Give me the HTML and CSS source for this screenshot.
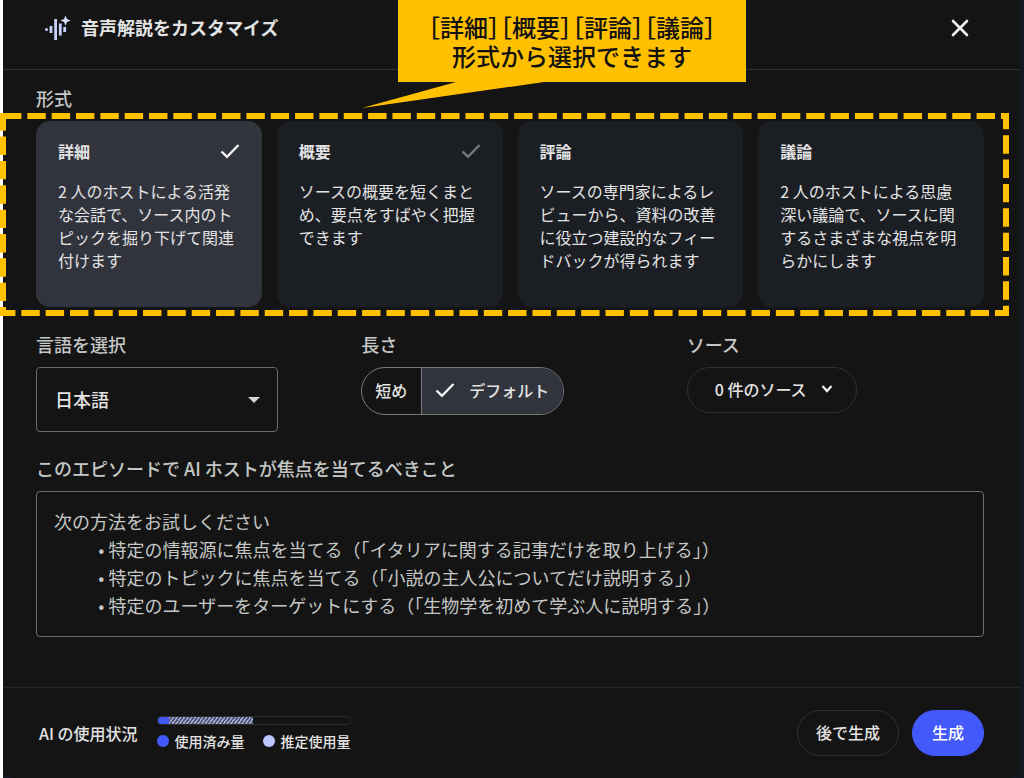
FILE: index.html
```html
<!DOCTYPE html>
<html lang="ja">
<head>
    <meta charset="UTF-8">
    <title>音声解説をカスタマイズ</title>
    <link rel="stylesheet" href="styles.css">
</head>
<body>
<div class="backdrop">
    <form class="dialog">
        <div class="header">
            <svg class="logo" width="28" height="28" viewBox="0 0 28 28" fill="none" stroke="#c5cffa" stroke-width="2.8">
                <path d="M8 12v7M12.600 5v21M17.300 9.500v12M21.700 13v5" />
                <circle cx="3.500" cy="15.500" r="1.500" fill="#c5cffa" stroke="none" />
                <path d="M22.500 1.500l1.400 3.600 3.800 1.400-3.800 1.400-1.400 3.800-1.400-3.800-3.800-1.400 3.800-1.400z" fill="#dbe1ff" stroke="none" />
            </svg>
            <h1>音声解説をカスタマイズ</h1>
            <button type="button" class="close" aria-label="閉じる">
                <svg width="20" height="20" viewBox="0 0 20 20" stroke="#f2f2f2" stroke-width="2.6" stroke-linecap="round"><path d="M3 3l14 14M17 3L3 17" /></svg>
            </button>
        </div>

        <div class="content">
            <fieldset class="formats">
                <legend class="label">形式</legend>
                <div class="cards">
                    <label class="card">
                        <input type="radio" name="format" class="hidden" checked>
                        <span class="card-title">詳細 <svg class="check" viewBox="0 0 20 16"><path d="M1.500 8.500l5.500 5.300L18.500 2" /></svg></span>
                        <span class="card-text">2 人のホストによる活発な会話で、ソース内のトピックを掘り下げて関連付けます</span>
                    </label>
                    <label class="card">
                        <input type="radio" name="format" class="hidden">
                        <span class="card-title">概要 <svg class="check faint" viewBox="0 0 20 16"><path d="M1.500 8.500l5.500 5.300L18.500 2" /></svg></span>
                        <span class="card-text">ソースの概要を短くまとめ、要点をすばやく把握できます</span>
                    </label>
                    <label class="card">
                        <input type="radio" name="format" class="hidden">
                        <span class="card-title">評論</span>
                        <span class="card-text">ソースの専門家によるレビューから、資料の改善に役立つ建設的なフィードバックが得られます</span>
                    </label>
                    <label class="card">
                        <input type="radio" name="format" class="hidden">
                        <span class="card-title">議論</span>
                        <span class="card-text">2 人のホストによる思慮深い議論で、ソースに関するさまざまな視点を明らかにします</span>
                    </label>
                    <div class="marker">
                        <svg width="100%" height="100%"><rect width="100%" height="100%" /></svg>
                    </div>
                </div>
            </fieldset>

            <div class="options">
                <div>
                    <label class="label" for="lang">言語を選択</label>
                    <div class="select">
                        <select id="lang"><option>日本語</option></select>
                        <svg width="12" height="6" viewBox="0 0 12 6"><path d="M0 0h12L6 6z" fill="#d6d6d6" /></svg>
                    </div>
                </div>
                <fieldset>
                    <legend class="label">長さ</legend>
                    <div class="segment">
                        <label><input type="radio" name="length" class="hidden">短め</label>
                        <label class="selected"><input type="radio" name="length" class="hidden" checked><svg class="check" viewBox="0 0 20 16"><path d="M1.500 8.500l5.500 5.300L18.500 2" /></svg>デフォルト</label>
                    </div>
                </fieldset>
                <div>
                    <div class="label">ソース</div>
                    <button type="button" class="pill sources">0 件のソース
                        <svg width="12" height="10" viewBox="0 0 12 10" fill="none" stroke="#f2f2f2" stroke-width="2.200"><path d="M1.500 2L6 7l4.500-5" /></svg>
                    </button>
                </div>
            </div>

            <label class="label" for="focus">このエピソードで AI ホストが焦点を当てるべきこと</label>
            <textarea id="focus" placeholder="次の方法をお試しください
           • 特定の情報源に焦点を当てる（「イタリアに関する記事だけを取り上げる」）
           • 特定のトピックに焦点を当てる（「小説の主人公についてだけ説明する」）
           • 特定のユーザーをターゲットにする（「生物学を初めて学ぶ人に説明する」）"></textarea>
        </div>

        <div class="footer">
            <span class="usage-title">AI の使用状況</span>
            <div class="usage">
                <div class="bar">
                    <div class="used" style="width: 6%"></div>
                    <div class="estimated" style="width: 44%"></div>
                </div>
                <div class="legend">
                    <span><i class="dot"></i>使用済み量</span>
                    <span><i class="dot light"></i>推定使用量</span>
                </div>
            </div>
            <button type="button" class="pill">後で生成</button>
            <button type="submit" class="pill primary">生成</button>
        </div>

        <div class="callout">
            <p class="brackets">［詳細］［概要］［評論］［議論］</p>
            <p>形式から選択できます</p>
            <svg class="tail" width="182" height="28" viewBox="0 0 182 28"><path d="M94 0h88v1L0 27 94 1z" fill="#ffc000" /></svg>
        </div>
    </form>
</div>
</body>
</html>
```
FILE: styles.css
```css
* {
    margin: 0;
    padding: 0;
    box-sizing: border-box;
}

body {
    background-color: #fff;
    color: #e3e3e3;
    font-family: "Noto Sans CJK JP", sans-serif;
    font-size: 16px;
    font-weight: 500;
}

fieldset {
    border: none;
    min-width: 0;
}

button, select, textarea {
    color: inherit;
    font: inherit;
}

svg {
    display: block;
    flex: none;
}

.backdrop {
    margin-left: 3px;
    padding-right: 4px;
    background-color: #14181f;
}

.dialog {
    position: relative;
    min-height: 100vh;
    background-color: #141414;
    border-radius: 0 0 12px 12px;
}

.hidden {
    position: absolute;
    opacity: 0;
    pointer-events: none;
}

.header {
    display: flex;
    align-items: center;
    height: 70px;
    padding: 0 50px 14px 40px;
    border-bottom: 1px solid #303134;
}

.header h1 {
    flex: 1;
    margin-left: 10px;
    padding-bottom: 2px;
    font-size: 18px;
    font-weight: 700;
}

.close {
    border: none;
    background: none;
    cursor: pointer;
}

.content {
    padding: 16px 36px 50px 33px;
}

.label {
    display: block;
    margin-bottom: 10px;
    font-size: 18px;
    line-height: 25px;
    color: #c4c7c5;
}

.cards {
    position: relative;
    display: grid;
    grid-template-columns: repeat(4, 1fr);
    gap: 15px;
}

.card {
    min-height: 186px;
    padding: 18px 22px;
    border-radius: 14px;
    background-color: #1b1e23;
    cursor: pointer;
}

.card:has(input:checked) {
    background-color: #32343d;
}

.card-title {
    display: flex;
    justify-content: space-between;
    align-items: center;
    line-height: 24px;
    font-weight: 700;
}

.card-text {
    display: block;
    margin-top: 17px;
    margin-right: -4px;
    line-height: 23px;
    font-weight: 400;
}

.check {
    width: 20px;
    height: 16px;
    fill: none;
    stroke: #f2f2f2;
    stroke-width: 2.4;
}

.faint {
    stroke: #77797c;
}

/* dashed frame around the cards */
.marker {
    position: absolute;
    top: -5px;
    bottom: -6px;
    left: -33px;
    right: -22px;
    pointer-events: none;
}

.marker svg {
    overflow: visible;
}

.marker rect {
    fill: none;
    stroke: #ffc000;
    stroke-width: 6;
    stroke-dasharray: 18.4 5.94;
}

.options {
    display: grid;
    grid-template-columns: repeat(3, 1fr);
    gap: 28px;
    margin: 25px 0 24px;
}

.select {
    position: relative;
    width: 242px;
}

.select select {
    width: 100%;
    height: 65px;
    padding: 0 18px 2px;
    border: 1px solid #6b6b6b;
    border-radius: 4px;
    background: none;
    font-size: 18px;
    appearance: none;
}

.select svg {
    position: absolute;
    top: 30px;
    right: 18px;
    pointer-events: none;
}

.segment {
    display: inline-flex;
    height: 48px;
    border: 1px solid #77797a;
    border-radius: 24px;
    overflow: hidden;
}

.segment label {
    display: flex;
    align-items: center;
    gap: 14px;
    padding: 0 14px 2px 13px;
    cursor: pointer;
}

.segment .selected {
    border-left: 1px solid #77797a;
    background-color: #32343d;
}

.pill {
    display: flex;
    align-items: center;
    height: 46px;
    padding: 0 18px 2px;
    border: 1px solid #303030;
    border-radius: 23px;
    background: none;
    cursor: pointer;
}

.sources {
    gap: 14px;
    padding: 0 23px 2px 27px;
}

textarea {
    display: block;
    width: 100%;
    height: 146px;
    padding: 15px 17px;
    border: 1px solid #6b6b6b;
    border-radius: 4px;
    background: none;
    font-size: 18px;
    font-weight: 400;
    line-height: 28px;
    resize: none;
}

textarea::placeholder {
    color: #c4c7c5;
}

.footer {
    display: flex;
    align-items: center;
    gap: 13px;
    padding: 22px 36px;
    border-top: 1px solid #262626;
}

.usage-title {
    margin-right: 6px;
}

.usage {
    margin-right: auto;
}

.bar {
    display: flex;
    height: 9px;
    border: 1px solid #2c2c2c;
    border-radius: 5px;
    overflow: hidden;
}

.used {
    background-color: #4459fb;
}

.estimated {
    background: repeating-linear-gradient(125deg, #a4abd6 0 1px, #4a4e66 2px 3px);
}

.legend {
    display: flex;
    gap: 18px;
    margin-top: 6px;
    font-size: 14px;
    line-height: 20px;
}

.legend span {
    display: flex;
    align-items: center;
    gap: 6px;
}

.dot {
    width: 12px;
    height: 12px;
    border-radius: 50%;
    background-color: #4459fb;
}

.light {
    background-color: #bcc6ff;
}

.primary {
    border-color: #4459fb;
    background-color: #4459fb;
    padding: 0 19px 2px;
    color: #fff;
}

.callout {
    position: absolute;
    top: 0;
    left: 395px;
    width: 348px;
    height: 82px;
    padding-top: 12px;
    background-color: #ffc000;
    color: #111;
    font-size: 24px;
    font-weight: 500;
    line-height: 29px;
    text-align: center;
}

.brackets {
    font-feature-settings: "halt";
}

.tail {
    position: absolute;
    top: 81px;
    left: -36px;
}
```
